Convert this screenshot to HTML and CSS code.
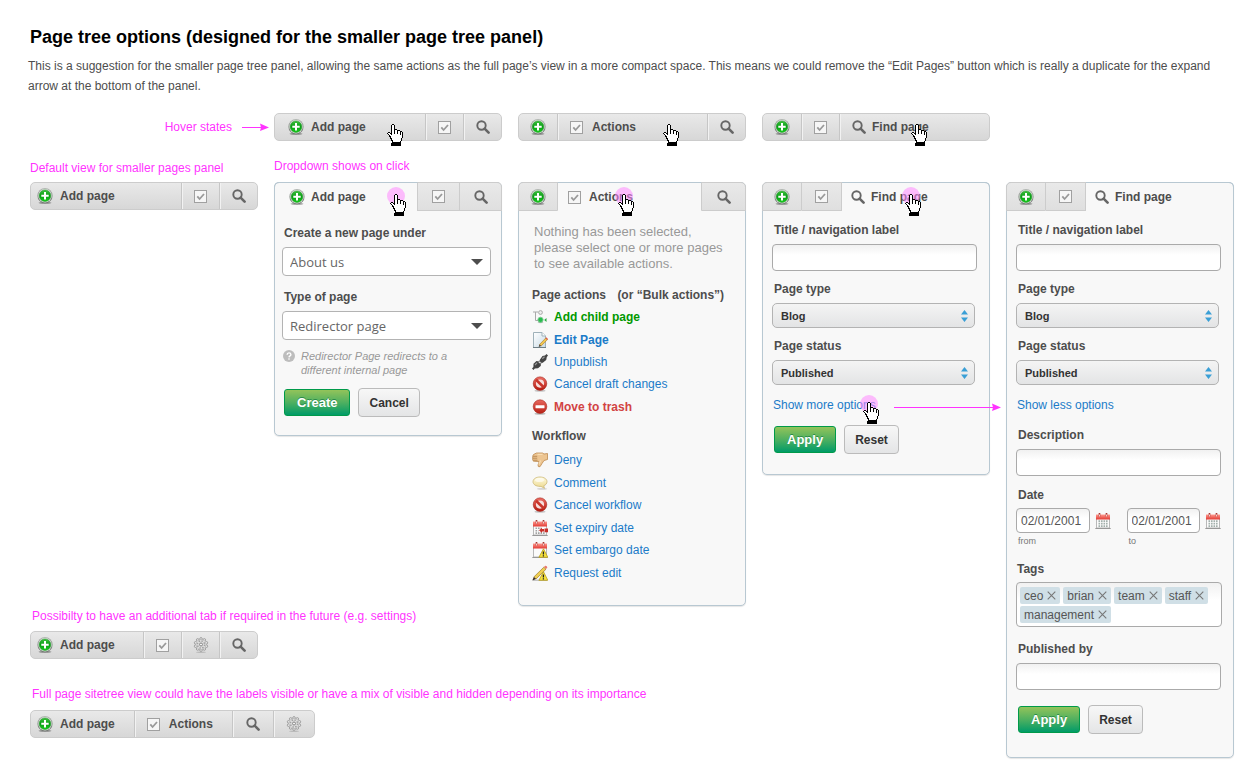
FILE: index.html
```html
<!DOCTYPE html>
<html lang="en">
<head>
<meta charset="utf-8">
<title>Page tree options</title>
<link rel="stylesheet" href="styles.css">
</head>
<body>
<svg class="sprite" aria-hidden="true">
  <defs>
    <linearGradient id="g-ring" x1="0" y1="0" x2="0" y2="1"><stop offset="0" stop-color="#b4b9b4"/><stop offset="1" stop-color="#666d66"/></linearGradient>
    <linearGradient id="g-green" x1="0" y1="0" x2="0" y2="1"><stop offset="0" stop-color="#3cc43c"/><stop offset=".5" stop-color="#0a9c16"/><stop offset="1" stop-color="#16cf1c"/></linearGradient>
    <linearGradient id="g-red" x1="0" y1="0" x2="0" y2="1"><stop offset="0" stop-color="#e8695f"/><stop offset="1" stop-color="#b81f14"/></linearGradient>
    <linearGradient id="g-cal" x1="0" y1="0" x2="0" y2="1"><stop offset="0" stop-color="#ff9a90"/><stop offset="1" stop-color="#e23a33"/></linearGradient>
    <linearGradient id="g-page" x1="0" y1="0" x2="1" y2="1"><stop offset="0" stop-color="#ffffff"/><stop offset="1" stop-color="#c9dbe6"/></linearGradient>
    <linearGradient id="g-talk" x1="0" y1="0" x2="0" y2="1"><stop offset="0" stop-color="#fffbe0"/><stop offset="1" stop-color="#ecd88c"/></linearGradient>
  </defs>
  <symbol id="add" viewBox="0 0 16 16">
    <ellipse cx="8" cy="14.800" rx="6.500" ry="1.200" fill="#000" opacity=".3"/>
    <circle cx="8" cy="7.700" r="7.600" fill="url(#g-ring)"/>
    <circle cx="8" cy="7.700" r="6.700" fill="#e6ece6"/>
    <circle cx="8" cy="7.700" r="5.800" fill="url(#g-green)" stroke="#1c8a22" stroke-width=".5"/>
    <path d="M7 4h2v2.700h2.700v2H9v2.700H7V8.700H4.300v-2H7z" fill="#fff"/>
  </symbol>
  <symbol id="check" viewBox="0 0 13 13">
    <rect x=".5" y=".5" width="12" height="12" fill="#f6f6f6" stroke="#a0a0a0"/>
    <path d="M3.300 6.300l2.300 2.700 4.400-5" fill="none" stroke="#999" stroke-width="1.800"/>
  </symbol>
  <symbol id="search" viewBox="0 0 14 14">
    <circle cx="5.500" cy="5.500" r="4.200" fill="none" stroke="#666" stroke-width="1.900"/>
    <path d="M8.600 8.600l4 4" stroke="#666" stroke-width="2.600" stroke-linecap="round"/>
  </symbol>
  <symbol id="gear" viewBox="0 0 16 16">
    <ellipse cx="8" cy="15.200" rx="5" ry=".8" fill="#000" opacity=".15"/>
    <g fill="#e2e2e2" stroke="#929292" stroke-width=".8">
      <circle cx="8" cy="1.900" r="1.300"/><circle cx="11.300" cy="2.900" r="1.300"/><circle cx="13.400" cy="5.800" r="1.300"/><circle cx="13.400" cy="9.200" r="1.300"/><circle cx="11.300" cy="12" r="1.300"/><circle cx="8" cy="13.100" r="1.300"/><circle cx="4.700" cy="12" r="1.300"/><circle cx="2.600" cy="9.200" r="1.300"/><circle cx="2.600" cy="5.800" r="1.300"/><circle cx="4.700" cy="2.900" r="1.300"/>
    </g>
    <circle cx="8" cy="7.500" r="4.800" fill="#dedede"/>
    <circle cx="8" cy="7.500" r="3.600" fill="none" stroke="#a3a3a3" stroke-width="1.500" stroke-dasharray="1.500 1.327"/>
    <circle cx="8" cy="7.500" r="1.500" fill="#f2f2f2" stroke="#858585"/>
  </symbol>
  <symbol id="hand" viewBox="0 0 16 22">
    <g shape-rendering="crispEdges">
      <path d="M5 0h2v1h1v4h2v1h3v1h2v1h1v6h-1v3h-1v2H5v-2H4v-2H3v-2H2v-2H1v-1H0V9h1V8h2v1h1V1h1z" fill="#000"/>
      <path d="M5 1h2v9h1V6h2v4h1V7h2v4h1V8h1v6h-1v3h-1v1H6v-2H5v-2H4v-2H3v-1H2v-1H1V9h2v1h1v1h1z" fill="#fff"/>
      <path d="M4 19h10v3H4z" fill="#000"/>
    </g>
  </symbol>
  <symbol id="tree" viewBox="0 0 16 16">
    <path d="M1 3h5M3.500 3v8.500H7" fill="none" stroke="#aaa"/>
    <circle cx="8.500" cy="3.500" r="1.900" fill="#eee" stroke="#aaa"/>
    <ellipse cx="8.500" cy="13.500" rx="3" ry=".8" fill="#000" opacity=".2"/>
    <circle cx="8.500" cy="10.800" r="2.600" fill="#25bd4b" stroke="#7fc793"/>
    <path d="M14.500 9v4l-2.300-2z" fill="#25a83f"/>
  </symbol>
  <symbol id="page" viewBox="0 0 16 16">
    <path d="M1.500.5h8.500l3.500 3.500v11.500h-12z" fill="url(#g-page)" stroke="#9fb1b9"/>
    <path d="M10 .5V4h3.500" fill="#fff" stroke="#9fb1b9"/>
    <path d="M1 15.500h13" stroke="#6f7f85"/>
    <path d="M7.500 12.500L13.800 6l1.700 1.600-6.300 6.300z" fill="#f2c94e" stroke="#a9742c" stroke-width=".6"/>
    <path d="M13.500 6.200l.9-.9 1.600 1.700-.9.900z" fill="#dd5a4d"/>
    <path d="M7.500 12.500l1.700 1.400-2.500 1z" fill="#453a2c"/>
  </symbol>
  <symbol id="plug" viewBox="0 0 16 16">
    <path d="M8 5.500L10.500 2l2.500-.5L14.500 0 16 1.500 14.800 3l-.6 3-3.400 2.700L9.500 9 7.500 7z" fill="#444"/>
    <path d="M0 14.500L1.400 13 1.500 9.800 4.500 7l1.300.2L9 10.500l-.3 1.500L6 14.200l-3.200.3L1.500 16z" fill="#444"/>
    <path d="M6 8.500l1.600-1.600M7.800 10.200l1.600-1.600" stroke="#777" stroke-width="1.200"/>
    <path d="M10.300 4.800l2.200-2M3 11l2-2.200" stroke="#999" stroke-width="1.200"/>
  </symbol>
  <symbol id="ban" viewBox="0 0 16 16">
    <ellipse cx="8" cy="14.800" rx="5.500" ry="1" fill="#000" opacity=".2"/>
    <circle cx="8" cy="7.600" r="5.500" fill="#f6dedb" stroke="url(#g-red)" stroke-width="2.800"/>
    <path d="M4 3.800l8 7.700" stroke="#c9362b" stroke-width="2.600"/>
    <circle cx="8" cy="7.600" r="6.800" fill="none" stroke="#9c2820" stroke-width=".5"/>
  </symbol>
  <symbol id="minus" viewBox="0 0 16 16">
    <ellipse cx="8" cy="14.800" rx="5.500" ry="1" fill="#000" opacity=".25"/>
    <circle cx="8" cy="7.600" r="6.800" fill="url(#g-red)" stroke="#a8281d" stroke-width=".6"/>
    <rect x="3.500" y="6.300" width="9" height="2.900" rx=".5" fill="#fff"/>
  </symbol>
  <symbol id="deny" viewBox="0 0 16 16">
    <path d="M1.500 2.500L4.500 1h6l1.500 1 3.500-.5v6l-3.500 1-2 3-2 3.200q-2.300.6-2-1.700l1.200-3.500-5-.2Q.6 9.300 1 8.200.2 7 .8 6q-.6-1 .2-2-.3-1 .5-1.500z" fill="#edc591" stroke="#bd894e" stroke-width=".8"/>
    <path d="M1.200 4.300h4M1 6.200h4.200M1.500 8.200h4" stroke="#a8743d" stroke-width=".7"/>
    <path d="M5.500 2.300h5M8.500 8.500l-1.700 4" stroke="#f8ddb4" stroke-width="1.200"/>
  </symbol>
  <symbol id="talk" viewBox="0 0 16 16">
    <ellipse cx="10" cy="13.900" rx="5" ry=".8" fill="#000" opacity=".15"/>
    <path d="M8 2c4 0 7 2 7 4.700 0 1.800-1.300 3.300-3.300 4.100l.8 2.500-3.500-1.900H8c-4 0-7-2-7-4.700S4 2 8 2z" fill="url(#g-talk)" stroke="#cdb977" stroke-width=".8"/>
    <ellipse cx="7.500" cy="5" rx="4.500" ry="2" fill="#fff" opacity=".6"/>
  </symbol>
  <symbol id="cal" viewBox="0 0 16 16">
    <path d="M.5 15.500h15" stroke="#777"/>
    <rect x="1.500" y="2.500" width="13" height="12.500" fill="#fbfbfb" stroke="#b9b9b9"/>
    <rect x="1" y="1.500" width="14" height="5" fill="url(#g-cal)"/>
    <path d="M4.500 0v3.500M11.500 0v3.500" stroke="#a8322c" stroke-width="1.600"/>
    <path d="M4.500 1.500v2M11.500 1.500v2" stroke="#fff" stroke-width=".8"/>
  </symbol>
  <symbol id="calendar" viewBox="0 0 16 16">
    <use href="#cal"/>
    <path d="M3.500 8.200h9.500M3.500 10.700h9.500M3.500 13.100h9.500" stroke="#a3b0ac" stroke-width="1.700" stroke-dasharray="1.600 .9"/>
  </symbol>
  <symbol id="expiry" viewBox="0 0 16 16">
    <use href="#cal"/>
    <path d="M3.500 8.200h6M3.500 10.700h3M3.500 13.100h9.500" stroke="#a3a3a3" stroke-width="1.600" stroke-dasharray="1.600 .9"/>
    <path d="M7 10.300l3-2.600v1.400h2v2.400h-2v1.500zM12.500 8.500H16v3.700h-3.500z" fill="#c9302a"/>
  </symbol>
  <symbol id="warn" viewBox="0 0 16 16">
    <path d="M11.500 6.800l4.300 8.500H6.900z" fill="#f7e23c" stroke="#b49a1e" stroke-width=".8" stroke-linejoin="round"/>
    <path d="M11.400 9.500v3M11.400 13.300v1.200" stroke="#222" stroke-width="1.300"/>
  </symbol>
  <symbol id="embargo" viewBox="0 0 16 16"><use href="#cal"/><use href="#warn"/></symbol>
  <symbol id="request" viewBox="0 0 16 16">
    <path d="M1 15.200h14" stroke="#999" stroke-width=".8"/>
    <path d="M1.800 12L11.800 2.200l2.200 2L4 14z" fill="#f0cf52" stroke="#9c7a2c" stroke-width=".7"/>
    <path d="M12 2l1.200-1.300q1.800-.2 2.200 1.900L14 4z" fill="#e8796f"/>
    <path d="M1.800 12L4 14 .3 15.500z" fill="#3a3026"/>
    <use href="#warn"/>
  </symbol>
  <symbol id="help" viewBox="0 0 12 12">
    <circle cx="6" cy="6" r="6" fill="#bdbdbd"/>
    <path d="M4.100 4.800q.1-1.900 1.900-1.900t1.900 1.600q0 .9-.9 1.400t-1 1.400" fill="none" stroke="#fff" stroke-width="1.400"/>
    <rect x="5.300" y="8.300" width="1.400" height="1.400" fill="#fff"/>
  </symbol>
  <symbol id="down" viewBox="0 0 12 6"><path d="M0 0h12L6 6z" fill="#4d4d4d"/></symbol>
  <symbol id="updown" viewBox="0 0 7 12"><path d="M0 4.500L3.500 0 7 4.500zM0 7.500h7L3.500 12z" fill="#3a9fd6"/></symbol>
  <symbol id="cross" viewBox="0 0 9 9"><path d="M.7.7l7.600 7.600M8.300.7L.7 8.300" stroke="#777" stroke-width="1.100"/></symbol>
</svg>

<header class="intro">
  <h1>Page tree options (designed for the smaller page tree panel)</h1>
  <p>This is a suggestion for the smaller page tree panel, allowing the same actions as the full page’s view in a more compact space. This means we could remove the “Edit Pages” button which is really a duplicate for the expand arrow at the bottom of the panel.</p>
</header>

<main class="board">
  <div class="hover-note note">Hover states
    <svg class="arrow" width="27" height="8" viewBox="0 0 27 8"><path d="M0 4.500h20" stroke="#f3f"/><path d="M18 .5l9 4-9 3.500 1-3.500z" fill="#f3f"/></svg>
  </div>

  <div class="bar">
    <button class="seg wide roomy"><svg class="i16"><use href="#add"/></svg>Add page</button>
    <button class="seg" aria-label="Actions"><svg class="i13"><use href="#check"/></svg></button>
    <button class="seg" aria-label="Find page"><svg class="i14"><use href="#search"/></svg></button>
    <svg class="hand at-bar-add"><use href="#hand"/></svg>
  </div>

  <div class="bar">
    <button class="seg" aria-label="Add page"><svg class="i16"><use href="#add"/></svg></button>
    <button class="seg wide lead"><svg class="i13"><use href="#check"/></svg>Actions</button>
    <button class="seg" aria-label="Find page"><svg class="i14"><use href="#search"/></svg></button>
    <svg class="hand at-bar-actions"><use href="#hand"/></svg>
  </div>

  <div class="bar">
    <button class="seg" aria-label="Add page"><svg class="i16"><use href="#add"/></svg></button>
    <button class="seg" aria-label="Actions"><svg class="i13"><use href="#check"/></svg></button>
    <button class="seg wide find"><svg class="i14"><use href="#search"/></svg>Find page</button>
    <svg class="hand at-bar-find"><use href="#hand"/></svg>
  </div>

  <div class="note caption first">Default view for smaller pages panel</div>
  <div class="note caption second">Dropdown shows on click</div>

  <section class="variants">
    <div class="bar">
      <button class="seg wide"><svg class="i16"><use href="#add"/></svg>Add page</button>
      <button class="seg" aria-label="Actions"><svg class="i13"><use href="#check"/></svg></button>
      <button class="seg" aria-label="Find page"><svg class="i14"><use href="#search"/></svg></button>
    </div>
    <div class="note push">Possibilty to have an additional tab if required in the future (e.g. settings)</div>
    <div class="bar">
      <button class="seg wide"><svg class="i16"><use href="#add"/></svg>Add page</button>
      <button class="seg" aria-label="Actions"><svg class="i13"><use href="#check"/></svg></button>
      <button class="seg" aria-label="Settings"><svg class="i16"><use href="#gear"/></svg></button>
      <button class="seg" aria-label="Find page"><svg class="i14"><use href="#search"/></svg></button>
    </div>
    <div class="note gap">Full page sitetree view could have the labels visible or have a mix of visible and hidden depending on its importance</div>
    <div class="bar full">
      <button class="seg wide"><svg class="i16"><use href="#add"/></svg>Add page</button>
      <button class="seg wide lead"><svg class="i13"><use href="#check"/></svg>Actions</button>
      <button class="seg" aria-label="Find page"><svg class="i14"><use href="#search"/></svg></button>
      <button class="seg" aria-label="Settings"><svg class="i16"><use href="#gear"/></svg></button>
    </div>
  </section>

  <section class="panel add-panel">
    <div class="tabs">
      <button class="tab active roomy"><svg class="i16"><use href="#add"/></svg>Add page</button>
      <button class="tab" aria-label="Actions"><svg class="i13"><use href="#check"/></svg></button>
      <button class="tab" aria-label="Find page"><svg class="i14"><use href="#search"/></svg></button>
      <span class="spot at-add"></span><svg class="hand at-add-hand"><use href="#hand"/></svg>
    </div>
    <form class="body">
      <label for="parent">Create a new page under</label>
      <div class="pick big"><select id="parent"><option>About us</option></select><svg class="mark-down"><use href="#down"/></svg></div>
      <label for="kind">Type of page</label>
      <div class="pick big"><select id="kind"><option>Redirector page</option></select><svg class="mark-down"><use href="#down"/></svg></div>
      <div class="help"><svg class="i12"><use href="#help"/></svg><p>Redirector Page redirects to a different internal page</p></div>
      <div class="buttons"><button type="button" class="btn go">Create</button><button type="button" class="btn">Cancel</button></div>
    </form>
  </section>

  <section class="panel actions-panel">
    <div class="tabs">
      <button class="tab" aria-label="Add page"><svg class="i16"><use href="#add"/></svg></button>
      <button class="tab active lead"><svg class="i13"><use href="#check"/></svg>Actions</button>
      <button class="tab last" aria-label="Find page"><svg class="i14"><use href="#search"/></svg></button>
      <span class="spot at-actions"></span><svg class="hand at-actions-hand"><use href="#hand"/></svg>
    </div>
    <div class="body">
      <p class="empty">Nothing has been selected, please select one or more pages to see available actions.</p>
      <h2>Page actions <span>(or “Bulk actions”)</span></h2>
      <ul class="five">
        <li><svg class="i16"><use href="#tree"/></svg><a class="child" href="#">Add child page</a></li>
        <li><svg class="i16"><use href="#page"/></svg><a class="edit" href="#">Edit Page</a></li>
        <li><svg class="i16"><use href="#plug"/></svg><a href="#">Unpublish</a></li>
        <li><svg class="i16"><use href="#ban"/></svg><a href="#">Cancel draft changes</a></li>
        <li><svg class="i16"><use href="#minus"/></svg><a class="trash" href="#">Move to trash</a></li>
      </ul>
      <h2>Workflow</h2>
      <ul class="six">
        <li><svg class="i16"><use href="#deny"/></svg><a href="#">Deny</a></li>
        <li><svg class="i16"><use href="#talk"/></svg><a href="#">Comment</a></li>
        <li><svg class="i16"><use href="#ban"/></svg><a href="#">Cancel workflow</a></li>
        <li><svg class="i16"><use href="#expiry"/></svg><a href="#">Set expiry date</a></li>
        <li><svg class="i16"><use href="#embargo"/></svg><a href="#">Set embargo date</a></li>
        <li><svg class="i16"><use href="#request"/></svg><a href="#">Request edit</a></li>
      </ul>
    </div>
  </section>

  <section class="panel find-panel">
    <div class="tabs">
      <button class="tab" aria-label="Add page"><svg class="i16"><use href="#add"/></svg></button>
      <button class="tab" aria-label="Actions"><svg class="i13"><use href="#check"/></svg></button>
      <button class="tab active find"><svg class="i14"><use href="#search"/></svg>Find page</button>
      <span class="spot at-find"></span><svg class="hand at-find-hand"><use href="#hand"/></svg>
    </div>
    <form class="body">
      <label for="title-a">Title / navigation label</label>
      <input class="text" id="title-a" type="text">
      <label for="type-a">Page type</label>
      <div class="pick"><select id="type-a"><option>Blog</option></select><svg class="mark-ud"><use href="#updown"/></svg></div>
      <label for="status-a">Page status</label>
      <div class="pick"><select id="status-a"><option>Published</option></select><svg class="mark-ud"><use href="#updown"/></svg></div>
      <div class="toggle"><a href="#">Show more options</a>
        <span class="spot at-more"></span><svg class="hand at-more-hand"><use href="#hand"/></svg>
        <svg class="long-arrow" width="107" height="8" viewBox="0 0 107 8"><path d="M0 4.500h100" stroke="#f3f"/><path d="M98 .5l9 4-9 3.500 1-3.500z" fill="#f3f"/></svg>
      </div>
      <div class="buttons"><button type="button" class="btn go">Apply</button><button type="button" class="btn">Reset</button></div>
    </form>
  </section>

  <section class="panel find-panel">
    <div class="tabs">
      <button class="tab" aria-label="Add page"><svg class="i16"><use href="#add"/></svg></button>
      <button class="tab" aria-label="Actions"><svg class="i13"><use href="#check"/></svg></button>
      <button class="tab active find"><svg class="i14"><use href="#search"/></svg>Find page</button>
    </div>
    <form class="body">
      <label for="title-b">Title / navigation label</label>
      <input class="text" id="title-b" type="text">
      <label for="type-b">Page type</label>
      <div class="pick"><select id="type-b"><option>Blog</option></select><svg class="mark-ud"><use href="#updown"/></svg></div>
      <label for="status-b">Page status</label>
      <div class="pick"><select id="status-b"><option>Published</option></select><svg class="mark-ud"><use href="#updown"/></svg></div>
      <div class="toggle"><a href="#">Show less options</a></div>
      <label for="desc">Description</label>
      <input class="text" id="desc" type="text">
      <fieldset class="dates">
        <legend>Date</legend>
        <div class="date"><input class="text" id="from" type="text" value="02/01/2001"><svg class="i16"><use href="#calendar"/></svg><label for="from">from</label></div>
        <div class="date"><input class="text" id="to" type="text" value="02/01/2001"><svg class="i16"><use href="#calendar"/></svg><label for="to">to</label></div>
      </fieldset>
      <h2 class="tags-title">Tags</h2>
      <div class="tags">
        <span class="chip">ceo<button type="button" aria-label="Remove ceo"><svg class="i9"><use href="#cross"/></svg></button></span>
        <span class="chip">brian<button type="button" aria-label="Remove brian"><svg class="i9"><use href="#cross"/></svg></button></span>
        <span class="chip">team<button type="button" aria-label="Remove team"><svg class="i9"><use href="#cross"/></svg></button></span>
        <span class="chip">staff<button type="button" aria-label="Remove staff"><svg class="i9"><use href="#cross"/></svg></button></span>
        <span class="chip">management<button type="button" aria-label="Remove management"><svg class="i9"><use href="#cross"/></svg></button></span>
      </div>
      <label for="by">Published by</label>
      <input class="text" id="by" type="text">
      <div class="buttons end"><button type="button" class="btn go">Apply</button><button type="button" class="btn">Reset</button></div>
    </form>
  </section>
</main>
</body>
</html>
```

FILE: styles.css
```css
* { box-sizing: border-box; }
body {
  margin: 0;
  background: #fff;
  color: #4d4d4d;
  font: 12px/16px "Liberation Sans", Arial, sans-serif;
}
h1, h2, p, ul, fieldset { margin: 0; padding: 0; }
button, input, select { font-family: inherit; margin: 0; }
svg { display: block; flex: none; }
.sprite { position: absolute; width: 0; height: 0; }
.i9 { width: 9px; height: 9px; }
.i12 { width: 12px; height: 12px; }
.i13 { width: 13px; height: 13px; }
.i14 { width: 14px; height: 14px; }
.i16 { width: 16px; height: 16px; }

.intro { padding: 26px 22px 0 28px; }
.intro h1 { padding-left: 2px; color: #000; font-size: 18px; line-height: 22px; }
.intro p { margin-top: 8px; line-height: 20px; }

.board {
  display: grid;
  grid-template-columns: repeat(5, minmax(0, 1fr));
  grid-template-rows: 28px 41px auto;
  column-gap: 16px;
  align-items: start;
  padding: 17px 22px 10px 30px;
}
.note { color: #f3f; white-space: nowrap; }
.hover-note {
  display: flex;
  align-items: center;
  align-self: center;
  justify-content: flex-end;
  gap: 10px;
  margin-right: -11px;
}
.caption { align-self: end; }
.caption.first { grid-column: 1; grid-row: 2; padding-bottom: 6px; }
.caption.second { grid-column: 2; grid-row: 2; padding-bottom: 8px; }

/* Toolbars */
.bar {
  position: relative;
  display: flex;
  height: 28px;
  border: 1px solid #ccc;
  border-radius: 5px;
  background: linear-gradient(#e9e9e9, #d7d7d7);
}
.seg, .tab {
  display: flex;
  align-items: center;
  justify-content: center;
  flex: 0 0 38px;
  padding: 0;
  border: 0;
  background: none;
  color: #4d4d4d;
  font-size: 12px;
  font-weight: bold;
}
.seg + .seg { border-left: 1px solid #c6c6c6; box-shadow: inset 1px 0 #f2f2f2; }
.seg.wide { flex: 1; justify-content: flex-start; gap: 7px; padding-left: 6px; }
.seg.roomy { padding-left: 13px; }
.seg.lead { gap: 9px; padding-left: 12px; }
.seg.find { gap: 6px; padding-left: 12px; }
.bar.full { width: 125%; }
.bar.full .seg { flex-basis: 41px; }
.bar.full .wide { flex: 1 0 auto; }

.variants {
  grid-column: 1;
  grid-row: 3;
  align-self: stretch;
  display: flex;
  flex-direction: column;
  padding-bottom: 20px;
}
.variants .note { padding-left: 2px; }
.push { margin-top: auto; margin-bottom: 7px; }
.gap { margin: 27px 0 8px; }

/* Panels */
.panel {
  grid-row: 3;
  border: 1px solid #b8c8d2;
  border-radius: 5px;
  background: #f8f8f8;
  box-shadow: 0 1px 1px #e6e6e6;
}
.tabs { position: relative; display: flex; height: 29px; margin: -1px -1px 0; }
.tab {
  flex-basis: 42px;
  border: 1px solid #ccc;
  border-left-width: 0;
  background: linear-gradient(#e9e9e9, #dfdfdf);
}
.tab:first-child { border-left-width: 1px; border-top-left-radius: 5px; }
.tab:nth-last-of-type(1) { border-top-right-radius: 5px; }
.tab.active {
  flex: 1;
  justify-content: flex-start;
  gap: 7px;
  border: 0;
  border-top: 1px solid #b8c8d2;
  background: none;
}
.tab.active.roomy { gap: 6px; padding-left: 14px; border-right: 1px solid #ccc; border-left: 1px solid #b8c8d2; }
.tab.active.lead { padding-left: 10px; gap: 8px; }
.tab.active.find { padding-left: 9px; gap: 6px; border-right: 1px solid #b8c8d2; }
.actions-panel .tab:first-child { flex-basis: 40px; }
.tab.last { flex-basis: 45px; border-left-width: 1px; }
.body { display: flex; flex-direction: column; }
label, h2, legend { color: #4d4d4d; font-size: 12px; line-height: 16px; font-weight: bold; }
label { padding-left: 2px; }
a { color: #1b7bc8; text-decoration: none; }

.add-panel .body { padding: 14px 10px 18px 7px; }
.pick { display: grid; align-items: center; margin-right: 2px; }
.pick > * { grid-area: 1 / 1; }
.pick svg { justify-self: end; pointer-events: none; }
.mark-down { width: 12px; height: 6px; margin-right: 8px; }
.mark-ud { width: 7px; height: 12px; margin-right: 7px; }
.pick select {
  appearance: none;
  width: 100%;
  height: 25px;
  padding: 0 8px;
  border: 1px solid #b3b3b3;
  border-radius: 5px;
  background: linear-gradient(#f4f4f4, #e3e4e5);
  color: #333;
  font-size: 11px;
  font-weight: bold;
}
.add-panel .pick { margin: 6px 0 13px; }
.pick.big select {
  height: 29px;
  padding: 0 7px;
  border-radius: 4px;
  background: #fff;
  color: #666;
  font: 13px "Open Sans", sans-serif;
}
.help { display: flex; gap: 6px; margin-top: -4px; padding-right: 20px; }
.help p { color: #999; font-style: italic; font-size: 11px; line-height: 14px; }
.help .i12 { margin-top: 1px; margin-left: 1px; }

.buttons { display: flex; align-items: center; gap: 8px; padding-left: 2px; margin-top: 10px; }
.add-panel .buttons { margin-top: 11px; }
.btn {
  height: 29px;
  padding: 0 10px;
  border: 1px solid #bbb;
  border-radius: 4px;
  background: linear-gradient(#f7f7f7, #e4e5e6);
  color: #333;
  font-size: 12px;
  font-weight: bold;
}
.btn.go {
  height: 27px;
  padding: 0 12px;
  border-color: #009a4a;
  border-radius: 3px;
  background: linear-gradient(#93c35a, #4fb060 50%, #009b68);
  color: #fff;
  font-size: 13px;
  text-shadow: 0 -1px #2c8a4a;
}

.actions-panel .body { padding: 13px 13px 21px 13px; }
.empty { padding: 0 8px 0 2px; color: #999; font-size: 13px; }
.actions-panel h2 { margin-top: 15px; }
.actions-panel h2 span { margin-left: 8px; }
.actions-panel ul + h2 { margin-top: 10px; }
.actions-panel ul { display: grid; grid-auto-rows: 1fr; list-style: none; margin-top: 3px; }
.actions-panel .five { height: 112px; }
.actions-panel .six { height: 135px; margin-top: 5px; }
.actions-panel li { display: flex; align-items: center; gap: 6px; }
.child { color: #090; font-weight: bold; }
.edit { font-weight: bold; }
.trash { color: #d24343; font-weight: bold; }

.find-panel .tab { flex-basis: 40px; }
.find-panel .tab.active { flex: 1; }
.find-panel .body { padding: 11px 12px 20px 9px; }
.text {
  width: 100%;
  height: 27px;
  border: 1px solid #aaa;
  border-radius: 4px;
  background: linear-gradient(#f1f1f1, #fff 40%);
  color: #555;
}
.find-panel .text { margin: 6px 0 10px; }
.find-panel .pick { margin: 6px 2px 10px 0; }
.toggle { position: relative; padding-left: 1px; line-height: 20px; }
.toggle + label { margin-top: 12px; }
.toggle + .buttons { margin-top: 10px; }
.dates { display: flex; gap: 16px; border: 0; }
.dates legend { padding: 1px 2px 0; }
.date { flex: 1; display: grid; grid-template-columns: minmax(0, 1fr) 16px; column-gap: 5px; align-items: center; }
.find-panel .date .text { height: 25px; margin: 5px 0 0; padding: 0 4px; font-size: 12px; }
.date .i16 { margin-top: 5px; }
.date label { color: #777; font-weight: normal; font-size: 9px; }
.tags-title { margin-top: 12px; padding-left: 1px; }
.tags {
  display: flex;
  flex-wrap: wrap;
  gap: 2px 3px;
  margin: 5px -1px 14px 0;
  padding: 4px 3px 3px;
  border: 1px solid #aaa;
  border-radius: 4px;
  background: linear-gradient(#f1f1f1, #fff 40%);
}
.chip { display: flex; align-items: center; gap: 4px; height: 17px; padding: 0 4px; border-radius: 2px; background: #d0dfe6; color: #555; }
.chip button { padding: 0; border: 0; background: none; }
.end { margin-top: 5px; padding-bottom: 3px; }

/* Pointer overlays */
.hand { position: absolute; width: 16px; height: 22px; pointer-events: none; }
.spot { position: absolute; width: 18px; height: 18px; border-radius: 50%; background: #f8f; opacity: .55; }
.at-bar-add { left: 112px; top: 10px; }
.at-bar-actions { left: 144px; top: 10px; }
.at-bar-find { left: 148px; top: 10px; }
.at-add { left: 113px; top: 5px; }
.at-add-hand { left: 116px; top: 12px; }
.at-actions { left: 97px; top: 5px; }
.at-actions-hand { left: 100px; top: 12px; }
.at-find { left: 140px; top: 5px; }
.at-find-hand { left: 143px; top: 12px; }
.at-more { left: 88px; top: 0; }
.at-more-hand { left: 91px; top: 7px; }
.long-arrow { position: absolute; left: 122px; top: 8px; }
```
